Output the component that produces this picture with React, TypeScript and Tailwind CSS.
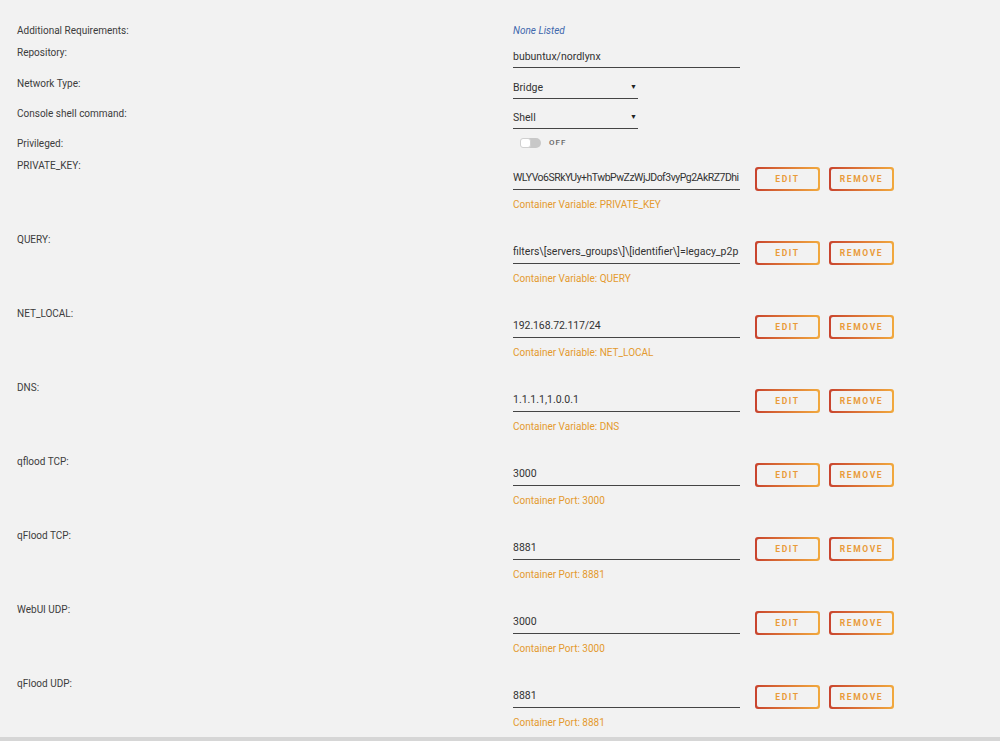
import React from 'react';

const font = { fontFamily: 'Roboto, "Liberation Sans", Arial, sans-serif' };

type Variable = { label: string; value: string; note: string; tracking: string };

const variables: Variable[] = [
    { label: 'PRIVATE_KEY:', value: 'WLYVo6SRkYUy+hTwbPwZzWjJDof3vyPg2AkRZ7Dhi', note: 'Container Variable: PRIVATE_KEY', tracking: 'tracking-[-0.5px]' },
    { label: 'QUERY:', value: 'filters\\[servers_groups\\]\\[identifier\\]=legacy_p2p', note: 'Container Variable: QUERY', tracking: 'tracking-[0px]' },
    { label: 'NET_LOCAL:', value: '192.168.72.117/24', note: 'Container Variable: NET_LOCAL', tracking: 'tracking-[-0.1px]' },
    { label: 'DNS:', value: '1.1.1.1,1.0.0.1', note: 'Container Variable: DNS', tracking: 'tracking-[0px]' },
    { label: 'qflood TCP:', value: '3000', note: 'Container Port: 3000', tracking: 'tracking-[0px]' },
    { label: 'qFlood TCP:', value: '8881', note: 'Container Port: 8881', tracking: 'tracking-[0px]' },
    { label: 'WebUI UDP:', value: '3000', note: 'Container Port: 3000', tracking: 'tracking-[0px]' },
    { label: 'qFlood UDP:', value: '8881', note: 'Container Port: 8881', tracking: 'tracking-[0px]' },
];

function GradientButton({ text }: { text: string }) {
    return (
        <div className="w-[65px] h-[24px] rounded-[3px] p-[2px] bg-gradient-to-r from-[#c8432e] to-[#f1a93e]">
            <div className="w-full h-full rounded-[2px] bg-[#f2f2f2] flex items-center justify-center text-[8.5px] font-bold tracking-[1.6px] text-[#e99b3a]">
                {text}
            </div>
        </div>
    );
}

function Label({ children }: { children: React.ReactNode }) {
    return <div className="w-[496px] shrink-0 pt-[1px] text-[10px] leading-[14px] text-[#3c3c3c]">{children}</div>;
}

function Select({ value }: { value: string }) {
    return (
        <div className="mt-[1px] w-[125px] h-[22px] border-b border-[#444] flex items-center justify-between pr-[1px] text-[10.5px] text-[#333]">
            <span>{value}</span>
            <span className="text-[7px] text-[#222]">▼</span>
        </div>
    );
}

function App() {
    return (
        <div className="h-screen w-full bg-[#f2f2f2] flex flex-col overflow-hidden" style={font}>
            <div className="flex-1 overflow-hidden pt-[23px] pl-[17px]">
                {/* Top settings */}
                <div className="flex h-[22px]">
                    <Label>Additional Requirements:</Label>
                    <div className="pt-[1px] text-[10px] leading-[14px] italic text-[#3f68ad]">None Listed</div>
                </div>
                <div className="flex h-[31px]">
                    <Label>Repository:</Label>
                    <div className="mt-[1px] w-[227px] h-[22px] border-b border-[#444] flex items-center text-[10.5px] text-[#333]">
                        bubuntux/nordlynx
                    </div>
                </div>
                <div className="flex h-[30px]">
                    <Label>Network Type:</Label>
                    <Select value="Bridge" />
                </div>
                <div className="flex h-[30px]">
                    <Label>Console shell command:</Label>
                    <Select value="Shell" />
                </div>
                <div className="flex h-[22px]">
                    <Label>Privileged:</Label>
                    <div className="flex items-center gap-[8px] pl-[7px] h-[14px]">
                        <div className="w-[21px] h-[10px] rounded-full bg-[#c8c8c8] flex items-center">
                            <div className="w-[11px] h-[10px] rounded-[3px] bg-white border border-[#d0d0d0]" />
                        </div>
                        <span className="text-[8px] font-medium tracking-[1px] text-[#666]">OFF</span>
                    </div>
                </div>

                {/* Variables and ports */}
                {variables.map((v, i) => (
                    <div key={i} className="flex h-[74px]">
                        <Label>{v.label}</Label>
                        <div className="pt-[9px]">
                            <div className="flex items-start">
                                <div className={`w-[227px] h-[23px] border-b border-[#444] flex items-center text-[10.5px] text-[#333] whitespace-nowrap overflow-hidden ${v.tracking}`}>
                                    {v.value}
                                </div>
                                <div className="flex gap-[9px] ml-[15px]">
                                    <GradientButton text="EDIT" />
                                    <GradientButton text="REMOVE" />
                                </div>
                            </div>
                            <div className="mt-[7px] text-[10px] leading-[14px] text-[#e49a2e]">{v.note}</div>
                        </div>
                    </div>
                ))}
            </div>
            <div className="h-[4px] bg-[#d6d6d6] shrink-0" />
        </div>
    );
}

export default App;
